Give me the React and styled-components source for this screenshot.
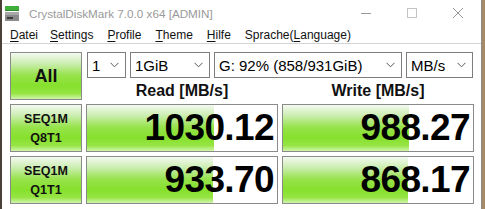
import React from "react";
import styled, { createGlobalStyle } from "styled-components";

const GlobalStyle = createGlobalStyle`
  html, body {
    margin: 0;
    padding: 0;
    height: 209px;
    overflow: hidden;
    background: linear-gradient(to right, #4b4038 0 50%, #a58a68 50%);
  }
`;

const green = `linear-gradient(
  to bottom,
  #f3f9ef 0%,
  #cdeeb4 22%,
  #97e34c 48%,
  #86e02c 72%,
  #97e545 88%,
  #d2f5ac 100%
)`;

const Window = styled.div`
  margin-left: 2px;
  width: 479px;
  height: 209px;
  border-right: 1px solid #8c8c8c;
  background: #ffffff;
  display: flex;
  flex-direction: column;
  font-family: "Liberation Sans", Arial, sans-serif;
`;

const TitleBar = styled.div`
  height: 26px;
  display: flex;
  align-items: center;
  padding-left: 3px;
`;

const Title = styled.span`
  margin-left: 10px;
  font-size: 11.7px;
  color: #9a9a9a;
  flex: 1;
`;

const Controls = styled.div`
  display: flex;
  align-items: center;
`;

const ControlButton = styled.div`
  width: 46px;
  height: 26px;
  display: flex;
  align-items: center;
  justify-content: center;
`;

const MenuBar = styled.div`
  height: 17px;
  display: flex;
  align-items: center;
  padding-left: 3px;
  border-bottom: 1px solid #d4d4d4;
`;

const MenuItem = styled.span`
  font-size: 12px;
  color: #111;
  padding: 0 ${(p) => p.$pad || 7}px;
  white-space: nowrap;

  u {
    text-decoration: underline;
    text-underline-offset: 2px;
  }
`;

const Main = styled.div`
  display: grid;
  grid-template-columns: 72px 192px 192px;
  grid-template-rows: 26px 18px 48px 48px;
  column-gap: 4px;
  row-gap: 4px;
  padding: 8px 0 0 8px;
`;

const AllButton = styled.div`
  grid-row: 1 / span 2;
  border: 1px solid #8a8a8a;
  background: ${green};
  display: flex;
  align-items: center;
  justify-content: center;
  font-weight: bold;
  font-size: 18px;
  color: #111;
`;

const ComboRow = styled.div`
  grid-column: 2 / span 2;
  display: flex;
  gap: 4px;
  padding-left: 1px;
`;

const Combo = styled.div`
  width: ${(p) => p.$w}px;
  box-sizing: border-box;
  border: 1px solid #7d7d7d;
  background: #fff;
  display: flex;
  align-items: center;
  justify-content: space-between;
  padding: 0 6px 0 4px;
  font-size: 15px;
  color: #000;
  white-space: nowrap;
`;

const Header = styled.div`
  display: flex;
  align-items: center;
  justify-content: center;
  font-weight: bold;
  font-size: 16px;
  color: #111;
`;

const LabelBox = styled.div`
  border: 1px solid #8a8a8a;
  background: ${green};
  display: flex;
  flex-direction: column;
  align-items: center;
  justify-content: center;
  gap: 3px;
  font-weight: bold;
  font-size: 12.5px;
  line-height: 16px;
  color: #111;
`;

const ResultBox = styled.div`
  border: 1px solid #8a8a8a;
  background: #fff;
  display: grid;
`;

const Fill = styled.div`
  grid-area: 1 / 1;
  background: ${green};
  height: 100%;
`;

const Value = styled.div`
  grid-area: 1 / 1;
  display: flex;
  align-items: center;
  justify-content: flex-end;
  padding-right: 3px;
  font-weight: bold;
  font-size: 37px;
  letter-spacing: -0.6px;
  color: #000;
`;

const Chevron = () => (
  <svg width="9" height="6" viewBox="0 0 9 6">
    <path d="M0.5 0.8 L4.5 4.8 L8.5 0.8" fill="none" stroke="#555" strokeWidth="1" />
  </svg>
);

const AppIcon = () => (
  <svg width="14" height="15" viewBox="0 0 14 15">
    <rect x="0" y="0" width="14" height="4" fill="#3fae3a" />
    <rect x="0" y="4" width="14" height="1" fill="#2d8a2a" />
    <rect x="0" y="6" width="14" height="9" fill="#8a8a8a" />
    <rect x="0" y="6" width="14" height="3" fill="#a8a8a8" />
    <rect x="2" y="11" width="6" height="2" fill="#3a3a3a" />
  </svg>
);

const combos = [
  { w: 39, text: "1" },
  { w: 80, text: "1GiB" },
  { w: 188, text: "G: 92% (858/931GiB)" },
  { w: 67, text: "MB/s" },
];

const results = [
  { l1: "SEQ1M", l2: "Q8T1", read: "1030.12", write: "988.27", rw: 127, ww: 126 },
  { l1: "SEQ1M", l2: "Q1T1", read: "933.70", write: "868.17", rw: 126, ww: 125 },
];

const App = () => (
  <>
    <GlobalStyle />
    <Window>
      <TitleBar>
        <AppIcon />
        <Title>CrystalDiskMark 7.0.0 x64 [ADMIN]</Title>
        <Controls>
          <ControlButton>
            <svg width="10" height="1"><rect width="10" height="1" fill="#9a9a9a" /></svg>
          </ControlButton>
          <ControlButton>
            <svg width="10" height="10"><rect x="0.5" y="0.5" width="9" height="9" fill="none" stroke="#c4c4c4" /></svg>
          </ControlButton>
          <ControlButton>
            <svg width="10" height="10"><path d="M0 0 L10 10 M10 0 L0 10" stroke="#9a9a9a" strokeWidth="1" /></svg>
          </ControlButton>
        </Controls>
      </TitleBar>
      <MenuBar>
        <MenuItem $pad={5}><u>D</u>atei</MenuItem>
        <MenuItem><u>S</u>ettings</MenuItem>
        <MenuItem><u>P</u>rofile</MenuItem>
        <MenuItem><u>T</u>heme</MenuItem>
        <MenuItem><u>H</u>ilfe</MenuItem>
        <MenuItem>Sprache(<u>L</u>anguage)</MenuItem>
      </MenuBar>
      <Main>
        <AllButton>All</AllButton>
        <ComboRow>
          {combos.map((c) => (
            <Combo key={c.text} $w={c.w}>
              <span>{c.text}</span>
              <Chevron />
            </Combo>
          ))}
        </ComboRow>
        <Header>Read [MB/s]</Header>
        <Header>Write [MB/s]</Header>
        {results.map((r) => (
          <React.Fragment key={r.l2}>
            <LabelBox>
              <span>{r.l1}</span>
              <span>{r.l2}</span>
            </LabelBox>
            <ResultBox>
              <Fill style={{ width: r.rw }} />
              <Value>{r.read}</Value>
            </ResultBox>
            <ResultBox>
              <Fill style={{ width: r.ww }} />
              <Value>{r.write}</Value>
            </ResultBox>
          </React.Fragment>
        ))}
      </Main>
    </Window>
  </>
);

export default App;
